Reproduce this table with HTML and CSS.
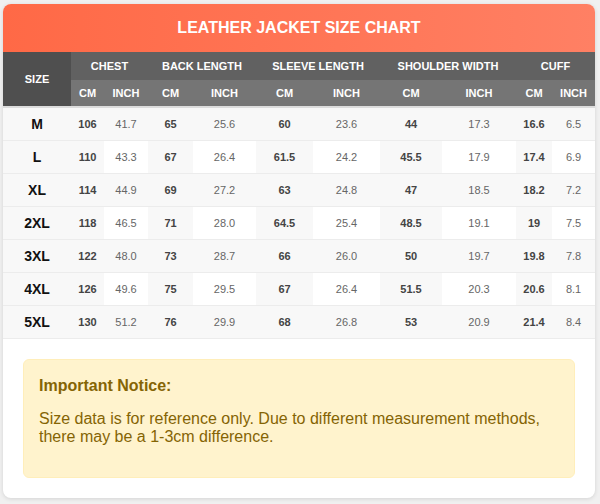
FILE: index.html
```html
<!DOCTYPE html>
<html lang="en">
<head>
<meta charset="utf-8">
<title>Leather Jacket Size Chart</title>
<link rel="stylesheet" href="styles.css">
</head>
<body>
<div class="card">
  <div class="title-bar">LEATHER JACKET SIZE CHART</div>
  <table class="chart">
    <colgroup>
      <col class="w-size">
      <col class="w33"><col class="w44">
      <col class="w45"><col class="w63">
      <col class="w57"><col class="w67">
      <col class="w62"><col class="w74">
      <col class="w36"><col class="w43">
    </colgroup>
    <thead>
      <tr class="group-row">
        <th rowspan="2" class="size-head">SIZE</th>
        <th colspan="2">CHEST</th>
        <th colspan="2">BACK LENGTH</th>
        <th colspan="2">SLEEVE LENGTH</th>
        <th colspan="2">SHOULDER WIDTH</th>
        <th colspan="2">CUFF</th>
      </tr>
      <tr class="unit-row">
        <th>CM</th><th>INCH</th>
        <th>CM</th><th>INCH</th>
        <th>CM</th><th>INCH</th>
        <th>CM</th><th>INCH</th>
        <th>CM</th><th>INCH</th>
      </tr>
    </thead>
    <tbody>
      <tr><td class="size">M</td><td class="cm">106</td><td class="in">41.7</td><td class="cm">65</td><td class="in">25.6</td><td class="cm">60</td><td class="in">23.6</td><td class="cm">44</td><td class="in">17.3</td><td class="cm">16.6</td><td class="in">6.5</td></tr>
      <tr><td class="size">L</td><td class="cm">110</td><td class="in">43.3</td><td class="cm">67</td><td class="in">26.4</td><td class="cm">61.5</td><td class="in">24.2</td><td class="cm">45.5</td><td class="in">17.9</td><td class="cm">17.4</td><td class="in">6.9</td></tr>
      <tr><td class="size">XL</td><td class="cm">114</td><td class="in">44.9</td><td class="cm">69</td><td class="in">27.2</td><td class="cm">63</td><td class="in">24.8</td><td class="cm">47</td><td class="in">18.5</td><td class="cm">18.2</td><td class="in">7.2</td></tr>
      <tr><td class="size">2XL</td><td class="cm">118</td><td class="in">46.5</td><td class="cm">71</td><td class="in">28.0</td><td class="cm">64.5</td><td class="in">25.4</td><td class="cm">48.5</td><td class="in">19.1</td><td class="cm">19</td><td class="in">7.5</td></tr>
      <tr><td class="size">3XL</td><td class="cm">122</td><td class="in">48.0</td><td class="cm">73</td><td class="in">28.7</td><td class="cm">66</td><td class="in">26.0</td><td class="cm">50</td><td class="in">19.7</td><td class="cm">19.8</td><td class="in">7.8</td></tr>
      <tr><td class="size">4XL</td><td class="cm">126</td><td class="in">49.6</td><td class="cm">75</td><td class="in">29.5</td><td class="cm">67</td><td class="in">26.4</td><td class="cm">51.5</td><td class="in">20.3</td><td class="cm">20.6</td><td class="in">8.1</td></tr>
      <tr><td class="size">5XL</td><td class="cm">130</td><td class="in">51.2</td><td class="cm">76</td><td class="in">29.9</td><td class="cm">68</td><td class="in">26.8</td><td class="cm">53</td><td class="in">20.9</td><td class="cm">21.4</td><td class="in">8.4</td></tr>
    </tbody>
  </table>
  <div class="notice-wrap">
    <div class="notice">
      <h3 class="notice-title">Important Notice:</h3>
      <p class="notice-text">Size data is for reference only. Due to different measurement methods, there may be a 1-3cm difference.</p>
    </div>
  </div>
</div>
</body>
</html>
```
FILE: styles.css
```css
* { box-sizing: border-box; }
html, body { margin: 0; }
body {
  background: #f0f0f0;
  padding: 4px 5px 5px 3px;
  font-family: "Liberation Sans", Arial, sans-serif;
}
.card {
  width: 592px;
  background: #fff;
  border-radius: 8px;
  overflow: hidden;
  box-shadow: 0 1px 4px rgba(0,0,0,0.12);
}
.title-bar {
  height: 48px;
  display: flex;
  align-items: center;
  justify-content: center;
  background: linear-gradient(to right, #ff6946, #ff8064);
  color: #fff;
  font-weight: bold;
  font-size: 16px;
}
.chart {
  width: 592px;
  border-collapse: collapse;
  table-layout: fixed;
  text-align: center;
}
.w-size { width: 68px; }
.w33 { width: 33px; }
.w44 { width: 44px; }
.w45 { width: 45px; }
.w63 { width: 63px; }
.w57 { width: 57px; }
.w67 { width: 67px; }
.w62 { width: 62px; }
.w74 { width: 74px; }
.w36 { width: 36px; }
.w43 { width: 43px; }
.chart th {
  color: #fff;
  font-weight: bold;
  font-size: 11px;
  padding: 0;
}
.group-row th { height: 28px; background: #616161; }
.unit-row th { height: 27px; background: #757575; border-bottom: 2px solid #dcdcdc; }
.group-row th.size-head { background: #4f4f4f; border-bottom: 2px solid #dcdcdc; }
.chart td {
  height: 33px;
  padding: 0;
  border-bottom: 1px solid #ececec;
  font-size: 11px;
}
.chart tbody tr:nth-child(odd) td { background: #f8f8f8; }
.chart td.size {
  background: #f8f8f8;
  font-size: 14px;
  font-weight: bold;
  color: #111;
}
.chart td.cm {
  background: #f8f8f8;
  font-weight: bold;
  color: #444;
}
.chart td.in {
  color: #666;
}
.notice-wrap {
  padding: 20px;
}
.notice {
  background: #fff3cd;
  border: 1px solid #ffeeba;
  border-radius: 6px;
  padding: 17px 15px 0;
  height: 119px;
  color: #856404;
}
.notice-title {
  margin: 0 0 15px;
  font-size: 16px;
  font-weight: bold;
}
.notice-text {
  margin: 0;
  font-size: 16px;
}
```
